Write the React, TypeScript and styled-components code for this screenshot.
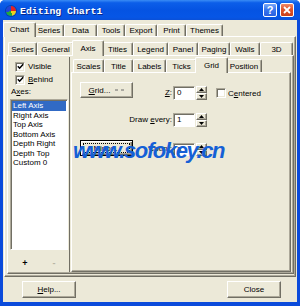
import React from "react";
import styled, { createGlobalStyle, css } from "styled-components";

const face = "#ECE9D8";
const hi = "#FFFFFF";
const sh = "#ACA899";
const dk = "#716F64";

const Global = createGlobalStyle`
  html, body { margin: 0; padding: 0; background: #ffffff; }
  body {
    font-family: "Liberation Sans", Arial, sans-serif;
    font-size: 8px;
    color: #000;
  }
  #root { width: 300px; height: 306px; }
`;

const Window = styled.div`
  position: relative;
  width: 300px;
  height: 306px;
  display: flex;
  flex-direction: column;
  background: #0b4bdb;
  border-radius: 5px 5px 0 0;
  overflow: hidden;
`;

const TitleBar = styled.div`
  height: 20px;
  flex: none;
  display: flex;
  align-items: center;
  padding: 2px 6px 0 6px;
  box-sizing: border-box;
  background: linear-gradient(
    180deg,
    #3a8cf5 0%,
    #0c5ee9 14%,
    #0553e2 50%,
    #0656e6 85%,
    #0a50d8 100%
  );
`;

const AppIcon = styled.span`
  width: 10px;
  height: 10px;
  border-radius: 50%;
  flex: none;
  background: conic-gradient(#e52222 0 25%, #f0d020 25% 45%, #22a83a 45% 70%, #2244d8 70% 100%);
  box-shadow: 0 0 0 1px rgba(0, 0, 0, 0.25);
`;

const TitleText = styled.span`
  margin-left: 4px;
  font-family: "Liberation Mono", "Courier New", monospace;
  font-weight: bold;
  font-size: 9.8px;
  color: #fff;
  text-shadow: 1px 1px 0 #0a2a8a;
  flex: 1;
  white-space: nowrap;
`;

const CapButton = styled.div<{ $close?: boolean }>`
  width: 14px;
  height: 14px;
  box-sizing: border-box;
  margin-left: 3px;
  margin-top: -2px;
  border: 1px solid #fff;
  border-radius: 2px;
  display: flex;
  align-items: center;
  justify-content: center;
  color: #fff;
  font-family: "Liberation Sans", Arial, sans-serif;
  font-weight: bold;
  font-size: 11px;
  background: ${(p) =>
    p.$close
      ? "linear-gradient(180deg, #f08a6a 0%, #e0542a 45%, #c8401a 100%)"
      : "linear-gradient(180deg, #7aa8f8 0%, #3a78ee 45%, #2a5fe0 100%)"};
`;

const Body = styled.div`
  flex: 1;
  min-height: 0;
  margin: 0 3px 4px 3px;
  background: ${face};
  display: flex;
  flex-direction: column;
`;

const TabControl = styled.div<{ $m?: string }>`
  flex: 1;
  min-height: 0;
  min-width: 0;
  display: flex;
  flex-direction: column;
  margin: ${(p) => p.$m || "0"};
`;

const TabStrip = styled.div<{ $h: number; $pl: number }>`
  flex: none;
  display: flex;
  align-items: flex-end;
  height: ${(p) => p.$h}px;
  padding-left: ${(p) => p.$pl}px;
`;

const Tab = styled.div<{ $w: number; $active?: boolean }>`
  flex: none;
  box-sizing: border-box;
  position: relative;
  width: ${(p) => p.$w + (p.$active ? 4 : 0)}px;
  height: ${(p) => (p.$active ? "calc(100% + 1px)" : "calc(100% - 2px)")};
  margin: 0 ${(p) => (p.$active ? -2 : 0)}px ${(p) => (p.$active ? -1 : 0)}px;
  z-index: ${(p) => (p.$active ? 2 : 1)};
  display: flex;
  align-items: center;
  justify-content: center;
  padding-bottom: ${(p) => (p.$active ? 1 : 0)}px;
  background: ${face};
  border-left: 1px solid ${hi};
  border-top: 1px solid ${hi};
  border-right: 1px solid ${dk};
  box-shadow: inset -1px 0 ${sh};
  border-radius: 2px 2px 0 0;
  white-space: nowrap;
`;

const Page = styled.div<{ $p: string }>`
  flex: 1;
  min-height: 0;
  box-sizing: border-box;
  display: flex;
  flex-direction: column;
  padding: ${(p) => p.$p};
  border-left: 1px solid ${hi};
  border-top: 1px solid ${hi};
  border-right: 1px solid ${dk};
  border-bottom: 1px solid ${dk};
  box-shadow: inset -1px -1px ${sh};
`;

const AxisLayout = styled.div`
  flex: 1;
  min-height: 0;
  display: flex;
  gap: 1px;
`;

const LeftPanel = styled.div`
  width: 61px;
  flex: none;
  box-sizing: border-box;
  display: flex;
  flex-direction: column;
  padding-top: 3px;
  border-right: 1px solid ${dk};
`;

const CheckRow = styled.label`
  height: 13px;
  display: flex;
  align-items: center;
  gap: 3px;
  padding-left: 6px;
  white-space: nowrap;
`;

const Box = styled.span`
  width: 10px;
  height: 10px;
  flex: none;
  box-sizing: border-box;
  background: #fff;
  border: 1px solid;
  border-color: ${sh} ${hi} ${hi} ${sh};
  box-shadow: inset 1px 1px ${dk}, inset -1px -1px ${face};
  display: flex;
  align-items: center;
  justify-content: center;
`;

const FieldLabel = styled.div`
  height: 10px;
  line-height: 10px;
  padding-left: 2px;
  margin: 1px 0 2px;
`;

const ListBox = styled.div`
  flex: 1;
  min-height: 0;
  margin: 0 1px;
  box-sizing: border-box;
  background: #fff;
  border: 1px solid;
  border-color: ${sh} ${hi} ${hi} ${sh};
  box-shadow: inset 1px 1px ${dk};
  padding: 1px 1px 0 1px;
`;

const ListItem = styled.div<{ $sel?: boolean }>`
  height: 9.5px;
  line-height: 9.5px;
  padding-left: 1px;
  white-space: nowrap;
  ${(p) =>
    p.$sel &&
    css`
      background: #316ac5;
      color: #fff;
    `}
`;

const MiniBar = styled.div`
  height: 22px;
  flex: none;
  display: flex;
  align-items: center;
  padding: 3px 0 0 2px;
  box-sizing: border-box;
  gap: 1px;
`;

const MiniBtn = styled.div<{ $off?: boolean }>`
  width: 28px;
  text-align: center;
  font-size: 9px;
  font-weight: bold;
  color: ${(p) => (p.$off ? "#b8b4a4" : "#000")};
`;

const GridBody = styled.div`
  display: flex;
  flex-direction: column;
  padding: 9px 0 0 8px;
`;

const Row = styled.div<{ $h: number; $mt: number }>`
  display: flex;
  align-items: flex-end;
  height: ${(p) => p.$h}px;
  margin-top: ${(p) => p.$mt}px;
`;

const Lead = styled.div`
  width: 92px;
  height: 100%;
  flex: none;
  display: flex;
  align-items: flex-end;
  margin-right: 1px;
`;

const Label = styled.span`
  margin-left: auto;
  line-height: 14px;
  white-space: nowrap;
`;

const Btn = styled.div<{ $w: number; $h: number; $mb?: number; $default?: boolean }>`
  width: ${(p) => p.$w}px;
  height: ${(p) => p.$h}px;
  margin-bottom: ${(p) => p.$mb || 0}px;
  flex: none;
  box-sizing: border-box;
  display: flex;
  align-items: center;
  justify-content: center;
  gap: 5px;
  background: ${face};
  border: 1px solid;
  border-color: ${hi} ${dk} ${dk} ${hi};
  box-shadow: inset -1px -1px ${sh};
  white-space: nowrap;
  ${(p) =>
    p.$default &&
    css`
      border-color: #000;
      box-shadow: inset 1px 1px ${hi}, inset -1px -1px ${dk}, inset -2px -2px ${sh};
      outline: 1px dotted #000;
      outline-offset: -4px;
    `}
`;

const Edit = styled.div<{ $h: number }>`
  width: 22px;
  height: ${(p) => p.$h}px;
  flex: none;
  box-sizing: border-box;
  background: #fff;
  border: 1px solid;
  border-color: ${sh} ${hi} ${hi} ${sh};
  box-shadow: inset 1px 1px ${dk};
  padding-left: 3px;
  line-height: ${(p) => p.$h - 2}px;
`;

const Spin = styled.div<{ $h: number }>`
  width: 11px;
  height: ${(p) => p.$h}px;
  margin-left: 1px;
  flex: none;
  display: flex;
  flex-direction: column;
`;

const SpinBtn = styled.div`
  flex: 1;
  box-sizing: border-box;
  background: ${face};
  border: 1px solid;
  border-color: ${hi} ${dk} ${dk} ${hi};
  box-shadow: inset -1px -1px ${sh};
  display: flex;
  align-items: center;
  justify-content: center;
`;

const CheckInline = styled.label`
  display: flex;
  align-items: center;
  gap: 2px;
  height: 14px;
  margin-left: 9px;
  white-space: nowrap;
`;

const Footer = styled.div`
  height: 25px;
  flex: none;
  display: flex;
  justify-content: space-between;
  align-items: flex-start;
  padding: 4px 16px 0 19px;
  box-sizing: border-box;
`;

const Watermark = styled.div`
  position: absolute;
  left: 73px;
  top: 138px;
  font-family: "Liberation Sans", Arial, sans-serif;
  font-weight: bold;
  font-style: italic;
  font-size: 22px;
  letter-spacing: -1.4px;
  color: #1560d6;
  white-space: nowrap;
  pointer-events: none;
`;

const Tick = () => (
  <svg width="7" height="7" viewBox="0 0 7 7">
    <path d="M0.8 3.3 L2.6 5.2 L6.2 1.2" fill="none" stroke="#000" strokeWidth="1.5" />
  </svg>
);

const Arrow = ({ up }: { up?: boolean }) => (
  <svg width="5" height="3" viewBox="0 0 5 3">
    <path d={up ? "M2.5 0 L5 3 L0 3 Z" : "M0 0 L5 0 L2.5 3 Z"} fill="#000" />
  </svg>
);

const Spinner = ({ h }: { h: number }) => (
  <Spin $h={h}>
    <SpinBtn>
      <Arrow up />
    </SpinBtn>
    <SpinBtn>
      <Arrow />
    </SpinBtn>
  </Spin>
);

const PenLine = () => (
  <svg width="9" height="2" viewBox="0 0 9 2">
    <line x1="0" y1="1" x2="9" y2="1" stroke="#6a6a6a" strokeWidth="1" strokeDasharray="3 3" />
  </svg>
);

const outerTabs: [string, number][] = [
  ["Chart", 29],
  ["Series", 30],
  ["Data", 33],
  ["Tools", 28],
  ["Export", 32],
  ["Print", 29],
  ["Themes", 37],
];

const chartTabs: [string, number][] = [
  ["Series", 29],
  ["General", 37],
  ["Axis", 28],
  ["Titles", 31],
  ["Legend", 35],
  ["Panel", 30],
  ["Paging", 32],
  ["Walls", 30],
  ["3D", 33],
];

const axisTabs: [string, number][] = [
  ["Scales", 31],
  ["Title", 29],
  ["Labels", 33],
  ["Ticks", 31],
  ["Grid", 29],
  ["Position", 36],
];

const axes = ["Left Axis", "Right Axis", "Top Axis", "Bottom Axis", "Depth Right", "Depth Top", "Custom 0"];

const Strip = ({ tabs, active, h, pl }: { tabs: [string, number][]; active: string; h: number; pl: number }) => (
  <TabStrip $h={h} $pl={pl}>
    {tabs.map(([t, w]) => (
      <Tab key={t} $w={w} $active={t === active}>
        {t}
      </Tab>
    ))}
  </TabStrip>
);

export default function App() {
  return (
    <>
      <Global />
      <Window>
        <TitleBar>
          <AppIcon />
          <TitleText>Editing Chart1</TitleText>
          <CapButton>?</CapButton>
          <CapButton $close>
            <svg width="8" height="8" viewBox="0 0 8 8">
              <path d="M1 1 L7 7 M7 1 L1 7" stroke="#fff" strokeWidth="1.8" />
            </svg>
          </CapButton>
        </TitleBar>
        <Body>
          <TabControl $m="2px 1px 0 1px">
            <Strip tabs={outerTabs} active="Chart" h={14} pl={1} />
            <Page $p="3px 1px 2px 2px">
              <TabControl>
                <Strip tabs={chartTabs} active="Axis" h={15} pl={1} />
                <Page $p="1px 2px 1px 1px">
                  <AxisLayout>
                    <LeftPanel>
                      <CheckRow>
                        <Box>
                          <Tick />
                        </Box>
                        Visible
                      </CheckRow>
                      <CheckRow>
                        <Box>
                          <Tick />
                        </Box>
                        <span>
                          <u>B</u>ehind
                        </span>
                      </CheckRow>
                      <FieldLabel>
                        A<u>x</u>es:
                      </FieldLabel>
                      <ListBox>
                        {axes.map((a, i) => (
                          <ListItem key={a} $sel={i === 0}>
                            {a}
                          </ListItem>
                        ))}
                      </ListBox>
                      <MiniBar>
                        <MiniBtn>+</MiniBtn>
                        <MiniBtn $off>-</MiniBtn>
                      </MiniBar>
                    </LeftPanel>
                    <TabControl>
                      <Strip tabs={axisTabs} active="Grid" h={15} pl={2} />
                      <Page $p="0">
                        <GridBody>
                          <Row $h={18} $mt={0}>
                            <Lead>
                              <Btn $w={53} $h={16} $mb={2}>
                                <span>
                                  <u>G</u>rid...
                                </span>
                                <PenLine />
                              </Btn>
                              <Label>
                                <u>Z</u>:
                              </Label>
                            </Lead>
                            <Edit $h={14}>0</Edit>
                            <Spinner h={14} />
                            <CheckInline>
                              <Box />
                              <span>
                                C<u>e</u>ntered
                              </span>
                            </CheckInline>
                          </Row>
                          <Row $h={14} $mt={13}>
                            <Lead>
                              <Label>
                                Draw <u>e</u>very:
                              </Label>
                            </Lead>
                            <Edit $h={14}>1</Edit>
                            <Spinner h={14} />
                          </Row>
                          <Row $h={16} $mt={13}>
                            <Lead>
                              <Btn $w={53} $h={16} $default>
                                <span>
                                  <u>M</u>inor...
                                </span>
                              </Btn>
                              <Label>Count:</Label>
                            </Lead>
                            <Edit $h={13}>3</Edit>
                            <Spinner h={13} />
                          </Row>
                        </GridBody>
                      </Page>
                    </TabControl>
                  </AxisLayout>
                </Page>
              </TabControl>
            </Page>
          </TabControl>
          <Footer>
            <Btn $w={54} $h={17}>
              <span>
                <u>H</u>elp...
              </span>
            </Btn>
            <Btn $w={54} $h={17}>
              Close
            </Btn>
          </Footer>
        </Body>
        <Watermark>www.sofokey.cn</Watermark>
      </Window>
    </>
  );
}
